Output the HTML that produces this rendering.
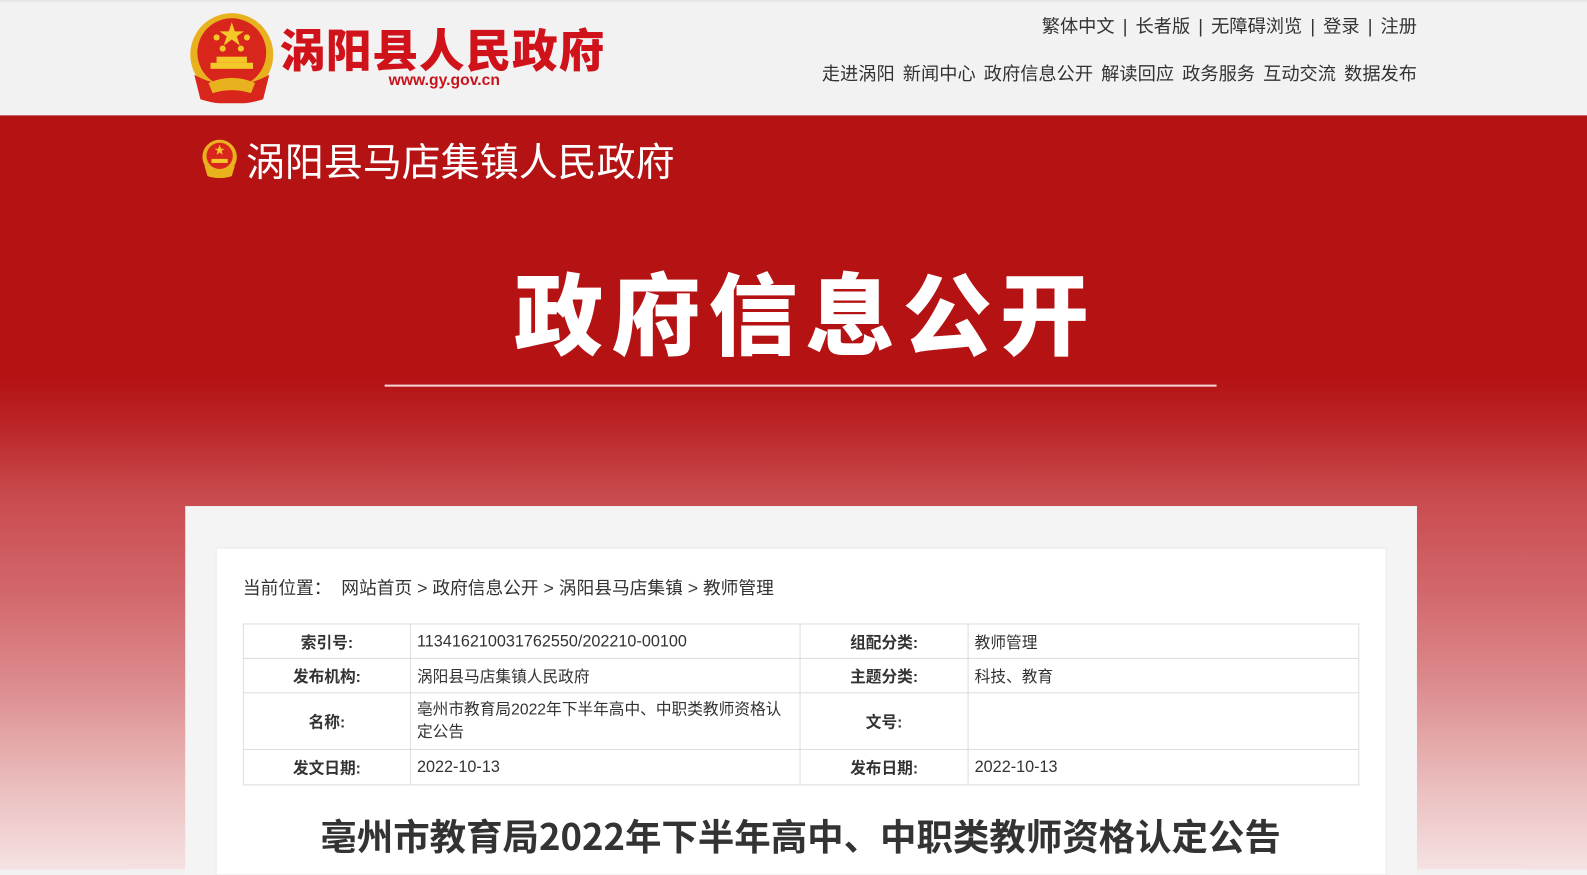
<!DOCTYPE html>
<html><head><meta charset="utf-8"><style>
*{margin:0;padding:0;box-sizing:border-box}
body{width:1587px;height:865px;overflow:hidden;position:relative;font-family:"Liberation Sans","Noto Sans CJK SC",sans-serif;background:#f2f2f2;color:#333}
#w{position:absolute;left:0;top:0;width:1568px;height:855px;transform:scale(1.01212);transform-origin:0 0}
.hdr{position:absolute;left:0;top:0;width:1568px;height:114px;background:#f2f2f2;border-top:2px solid #e6e6e6}
.ban{position:absolute;left:0;top:114px;width:1568px;height:745px;background:linear-gradient(180deg,#b51214 0px,#b51214 260px,#bb2426 305px,#c94a4e 375px,#d2676b 470px,#dc8a8d 560px,#ebbcbc 660px,#f5e2e2 745px)}
.a{position:absolute;white-space:nowrap}
.top1{right:168px;top:12px;font-size:18px;color:#333}
.top1 span{margin:0 8px}
.top2{right:168px;top:59px;font-size:18px;color:#333}
.top2 b{font-weight:normal;margin-left:8px}
.panel{position:absolute;left:183px;top:500px;width:1217px;height:365px;background:#f4f4f4}
.inner{position:absolute;left:213px;top:541px;width:1157px;height:324px;background:#fff;border:1px solid #e8e8e8}
table{position:absolute;left:240px;top:616px;width:1103px;border-collapse:collapse;font-size:15.5px}
td{border:1px solid #ddd;padding:0 6px;color:#333;vertical-align:middle}
td.k{text-align:center;font-weight:bold}
td.n{font-size:16px;padding-top:2px}
</style></head><body><div id="w">
<div class="hdr"></div>
<svg class="a" style="left:186px;top:12px" width="86" height="90" viewBox="0 0 86 90">
<circle cx="43" cy="42" r="41" fill="#e8b21e"/>
<circle cx="43" cy="40" r="34" fill="#d9261c"/>
<polygon points="43,10 46,19 55,19 48,24 51,33 43,27 35,33 38,24 31,19 40,19" fill="#f5c82a"/>
<circle cx="28" cy="25" r="3" fill="#f5c82a"/><circle cx="58" cy="25" r="3" fill="#f5c82a"/>
<circle cx="34" cy="36" r="3" fill="#f5c82a"/><circle cx="52" cy="36" r="3" fill="#f5c82a"/>
<rect x="22" y="50" width="42" height="6" fill="#f5c82a"/><rect x="28" y="44" width="30" height="6" fill="#f5c82a"/>
<path d="M6 62 Q43 82 80 62 L74 86 Q43 96 12 86Z" fill="#d9261c"/>
<path d="M20 70 Q43 60 66 70 L62 80 Q43 74 24 80Z" fill="#e8b21e"/>
</svg>
<div class="a" style="left:276px;top:14px;font-size:45px;font-weight:900;color:#d0121a;letter-spacing:1px;font-family:'Noto Sans CJK SC',sans-serif;line-height:66px">涡阳县人民政府</div>
<div class="a" style="left:384px;top:71px;font-size:15.5px;font-weight:bold;color:#c8141c">www.gy.gov.cn</div>
<div class="a top1">繁体中文<span>|</span>长者版<span>|</span>无障碍浏览<span>|</span>登录<span>|</span>注册</div>
<div class="a top2">走进涡阳<b>新闻中心</b><b>政府信息公开</b><b>解读回应</b><b>政务服务</b><b>互动交流</b><b>数据发布</b></div>
<div class="ban"></div>
<svg class="a" style="left:199px;top:138px" width="36" height="38" viewBox="0 0 36 38">
<circle cx="18" cy="17" r="17" fill="#e8b21e"/><circle cx="18" cy="16" r="13" fill="#d9261c"/>
<polygon points="18,5 19.5,9 23,9 20,11 21,15 18,12.5 15,15 16,11 13,9 16.5,9" fill="#f5c82a"/>
<rect x="10" y="19" width="16" height="4" fill="#f5c82a"/>
<path d="M3 26 Q18 34 33 26 L30 36 Q18 40 6 36Z" fill="#e8b21e"/>
</svg>
<div class="a" style="left:243px;top:130px;font-size:38.5px;color:#fff">涡阳县马店集镇人民政府</div>
<div class="a" style="left:508px;top:252px;font-size:88px;font-weight:900;color:#fff;letter-spacing:8px;font-family:'Noto Sans CJK SC',sans-serif;line-height:110px">政府信息公开</div>
<div class="a" style="left:380px;top:380px;width:822px;height:2px;background:#f2d6d6"></div>
<div class="panel"></div>
<div class="inner"></div>
<div class="a" style="left:240px;top:568px;font-size:17.5px;color:#333">当前位置：&nbsp;&nbsp;网站首页 &gt; 政府信息公开 &gt; 涡阳县马店集镇 &gt; 教师管理</div>
<table>
<tr style="height:34px"><td class="k" style="width:165px">索引号:</td><td class="n" style="width:385px">113416210031762550/202210-00100</td><td class="k" style="width:166px">组配分类:</td><td>教师管理</td></tr>
<tr style="height:34px"><td class="k">发布机构:</td><td>涡阳县马店集镇人民政府</td><td class="k">主题分类:</td><td>科技、教育</td></tr>
<tr style="height:56px"><td class="k">名称:</td><td style="line-height:22px">亳州市教育局2022年下半年高中、中职类教师资格认定公告</td><td class="k">文号:</td><td></td></tr>
<tr style="height:35px"><td class="k">发文日期:</td><td class="n">2022-10-13</td><td class="k">发布日期:</td><td class="n">2022-10-13</td></tr>
</table>
<div class="a" style="left:0;width:1582px;text-align:center;top:799px;font-size:36px;font-weight:bold;color:#333;font-family:'Noto Sans CJK SC',sans-serif">亳州市教育局2022年下半年高中、中职类教师资格认定公告</div>
</div></body></html>
